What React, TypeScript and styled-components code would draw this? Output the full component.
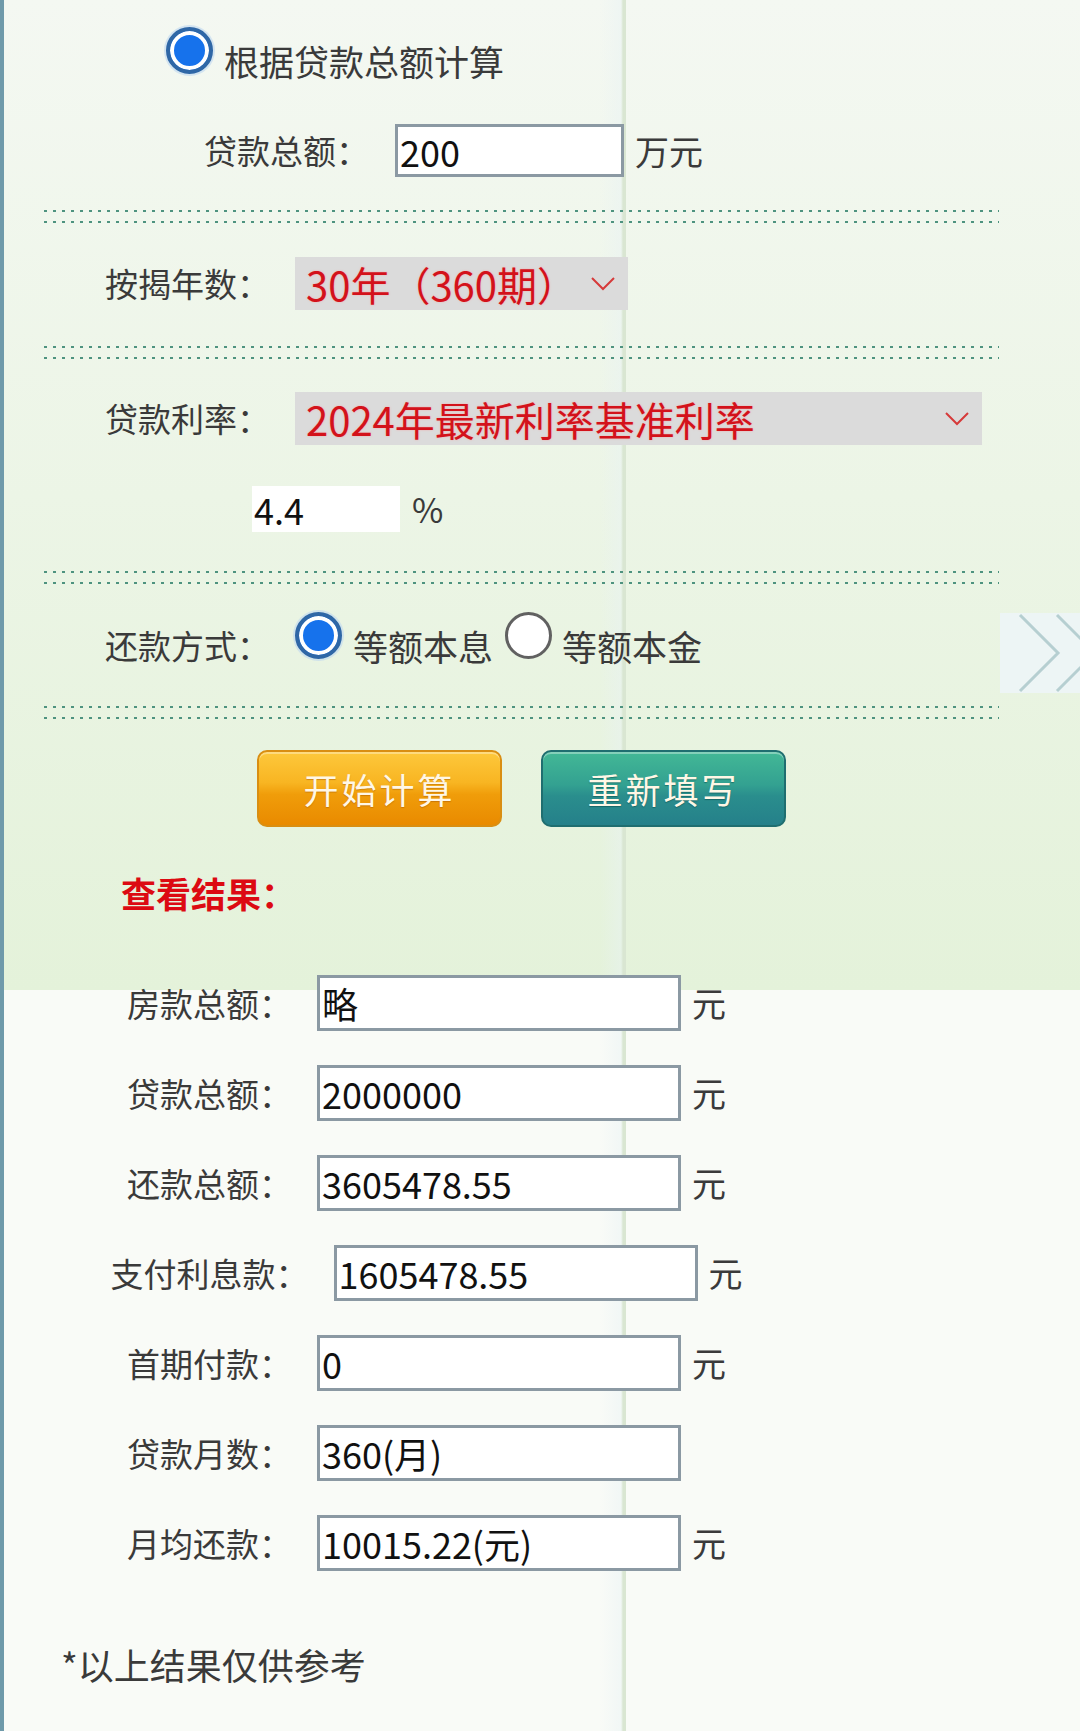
import styled, { createGlobalStyle, css } from "styled-components";

const GlobalStyle = createGlobalStyle`
  html, body {
    margin: 0;
    padding: 0;
  }
  body {
    font-family: "Noto Sans CJK SC", "Noto Sans", sans-serif;
    color: #3a3a3a;
  }
`;

const Page = styled.div`
  position: relative;
  box-sizing: border-box;
  width: 1080px;
  min-height: 1731px;
  overflow: hidden;
  border-left: 4px solid #6f9aaa;
  background:
    linear-gradient(to right, transparent 596px, rgba(232, 242, 244, 0.45) 617px, #d9e6d2 619px, #d9e6d2 622px, transparent 622px),
    linear-gradient(#f4f8f2, #e4f2da) 0 0 / 100% 990px no-repeat,
    #f9fbf7;
  display: flex;
  flex-direction: column;
`;

const Row = styled.div<{ $top: number; $left?: number; $h: number }>`
  display: flex;
  align-items: center;
  margin-top: ${({ $top }) => $top}px;
  padding-left: ${({ $left }) => $left ?? 0}px;
  height: ${({ $h }) => $h}px;
`;

const Label = styled.span<{ $w?: number; $drop?: boolean; $gap?: number }>`
  flex: none;
  width: ${({ $w }) => ($w ? `${$w}px` : "auto")};
  margin-right: ${({ $gap }) => $gap ?? 0}px;
  padding-top: ${({ $drop }) => ($drop ? 20 : 0)}px;
  font-size: 33px;
  line-height: 1;
  color: #3a3a3a;
  white-space: nowrap;
`;

const Unit = styled.span<{ $gap?: number }>`
  flex: none;
  margin-left: ${({ $gap }) => $gap ?? 11}px;
  font-size: 34px;
  line-height: 1;
  color: #3a3a3a;
`;

const TextBox = styled.div<{ $w: number; $h?: number; $plain?: boolean }>`
  flex: none;
  box-sizing: border-box;
  width: ${({ $w }) => $w}px;
  height: ${({ $h }) => $h ?? 53}px;
  display: flex;
  align-items: center;
  padding-left: 2px;
  background: #fff;
  border: ${({ $plain }) => ($plain ? "none" : "3px solid #8b99a3")};
  font-size: 36px;
  line-height: 1;
  color: #111;
`;

const Select = styled.div<{ $w: number }>`
  flex: none;
  box-sizing: border-box;
  width: ${({ $w }) => $w}px;
  height: 53px;
  display: flex;
  align-items: center;
  justify-content: space-between;
  padding: 0 13px 0 11px;
  background: #dbdbdb;
  color: #d3121b;
  font-size: 40px;
  line-height: 1;
  text-shadow: 0 0 2px rgba(255, 150, 150, 0.7);
`;

const Divider = styled.div<{ $top: number }>`
  flex: none;
  margin-top: ${({ $top }) => $top}px;
  margin-left: 40px;
  width: 955px;
  height: 13px;
  background-image:
    linear-gradient(to right, #4e937f 3px, transparent 3px),
    linear-gradient(to right, #4e937f 3px, transparent 3px);
  background-size: 9px 2px;
  background-repeat: repeat-x;
  background-position: 0 0, 0 100%;
`;

const RadioDot = styled.span<{ $checked?: boolean; $gap?: number }>`
  flex: none;
  box-sizing: border-box;
  width: 47px;
  height: 47px;
  margin-left: ${({ $gap }) => $gap ?? 0}px;
  border-radius: 50%;
  ${({ $checked }) =>
    $checked
      ? css`
          border: 4px solid #2f67a6;
          background: #1672ec;
          box-shadow: inset 0 0 0 4px #fff, 0 0 0 2px rgba(190, 215, 240, 0.6);
        `
      : css`
          border: 3px solid #616161;
          background: #fff;
        `}
`;

const RadioText = styled.span<{ $gap: number }>`
  flex: none;
  margin-left: ${({ $gap }) => $gap}px;
  padding-top: 20px;
  font-size: 35px;
  line-height: 1;
  color: #3a3a3a;
  white-space: nowrap;
`;

const ButtonBar = styled.div`
  display: flex;
  gap: 39px;
  margin-top: 31px;
  padding-left: 253px;
`;

const ActionButton = styled.button<{ $tone: "orange" | "teal" }>`
  width: 245px;
  height: 77px;
  border-radius: 10px;
  font-family: "Noto Sans CJK SC", sans-serif;
  font-size: 35px;
  letter-spacing: 3px;
  color: #fff7e6;
  cursor: pointer;
  ${({ $tone }) =>
    $tone === "orange"
      ? css`
          border: 2px solid #d98e12;
          background: linear-gradient(#fdc83c 0%, #f8b522 42%, #f09d0a 58%, #e98a00 100%);
          text-shadow: 0 1px 1px rgba(160, 80, 0, 0.45);
        `
      : css`
          border: 2px solid #1f6e70;
          background: linear-gradient(#43b896 0%, #33a191 45%, #2a8e8d 60%, #25808a 100%);
          text-shadow: 0 1px 1px rgba(0, 60, 60, 0.45);
        `}
  box-shadow: inset 0 2px 0 rgba(255, 255, 255, 0.35);
`;

const ResultTitle = styled.div`
  margin-top: 47px;
  padding-left: 117px;
  height: 36px;
  display: flex;
  align-items: center;
  font-size: 35px;
  font-weight: 700;
  color: #dc0a12;
`;

const ResultList = styled.div`
  margin-top: 65px;
  width: 846px;
  display: flex;
  flex-direction: column;
  gap: 34px;
`;

const ResultRow = styled.div`
  display: flex;
  align-items: center;
  justify-content: center;
  height: 56px;
`;

const UnitSlot = styled.span`
  flex: none;
  width: 35px;
  margin-left: 11px;
  font-size: 34px;
  line-height: 1;
  color: #3a3a3a;
`;

const Footnote = styled.div`
  margin-top: 74px;
  padding-left: 57px;
  font-size: 36px;
  line-height: 38px;
  color: #3a3a3a;
`;

const NextTab = styled.div`
  position: absolute;
  top: 613px;
  right: 0;
  width: 80px;
  height: 80px;
  background: #edf5f5;
`;

const Chevron = () => (
  <svg width="24" height="14" viewBox="0 0 24 14">
    <polyline points="1,1 12,12 23,1" fill="none" stroke="#d63a3a" strokeWidth="2" />
  </svg>
);

const results = [
  { label: "房款总额：", value: "略", unit: "元" },
  { label: "贷款总额：", value: "2000000", unit: "元" },
  { label: "还款总额：", value: "3605478.55", unit: "元" },
  { label: "支付利息款：", value: "1605478.55", unit: "元" },
  { label: "首期付款：", value: "0", unit: "元" },
  { label: "贷款月数：", value: "360(月)", unit: "" },
  { label: "月均还款：", value: "10015.22(元)", unit: "元" },
];

export default function App() {
  return (
    <>
      <GlobalStyle />
      <Page>
        <Row $top={25} $left={162} $h={50}>
          <RadioDot $checked />
          <RadioText $gap={11}>根据贷款总额计算</RadioText>
        </Row>

        <Row $top={49} $left={200} $h={53}>
          <Label $w={191}>贷款总额：</Label>
          <TextBox $w={229}>200</TextBox>
          <Unit>万元</Unit>
        </Row>

        <Divider $top={33} />

        <Row $top={34} $left={101} $h={53}>
          <Label $w={190}>按揭年数：</Label>
          <Select $w={333}>
            <span>30年（360期）</span>
            <Chevron />
          </Select>
        </Row>

        <Divider $top={36} />

        <Row $top={33} $left={101} $h={53}>
          <Label $w={190}>贷款利率：</Label>
          <Select $w={687}>
            <span>2024年最新利率基准利率</span>
            <Chevron />
          </Select>
        </Row>

        <Row $top={41} $left={248} $h={46}>
          <TextBox $w={148} $h={46} $plain>
            4.4
          </TextBox>
          <Unit $gap={12}>%</Unit>
        </Row>

        <Divider $top={39} />

        <Row $top={26} $left={101} $h={50}>
          <Label $w={190} $drop>
            还款方式：
          </Label>
          <RadioDot $checked />
          <RadioText $gap={11}>等额本息</RadioText>
          <RadioDot $gap={12} />
          <RadioText $gap={10}>等额本金</RadioText>
        </Row>

        <Divider $top={46} />

        <ButtonBar>
          <ActionButton $tone="orange">开始计算</ActionButton>
          <ActionButton $tone="teal">重新填写</ActionButton>
        </ButtonBar>

        <ResultTitle>查看结果：</ResultTitle>

        <ResultList>
          {results.map((r) => (
            <ResultRow key={r.label}>
              <Label $gap={25}>{r.label}</Label>
              <TextBox $w={364} $h={56}>
                {r.value}
              </TextBox>
              <UnitSlot>{r.unit}</UnitSlot>
            </ResultRow>
          ))}
        </ResultList>

        <Footnote>*以上结果仅供参考</Footnote>

        <NextTab>
          <svg width="80" height="80" viewBox="0 0 80 80">
            <polyline points="20,2 58,40 20,78" fill="none" stroke="#b6cfd1" strokeWidth="3" />
            <polyline points="57,2 95,40 57,78" fill="none" stroke="#b6cfd1" strokeWidth="3" />
          </svg>
        </NextTab>
      </Page>
    </>
  );
}
